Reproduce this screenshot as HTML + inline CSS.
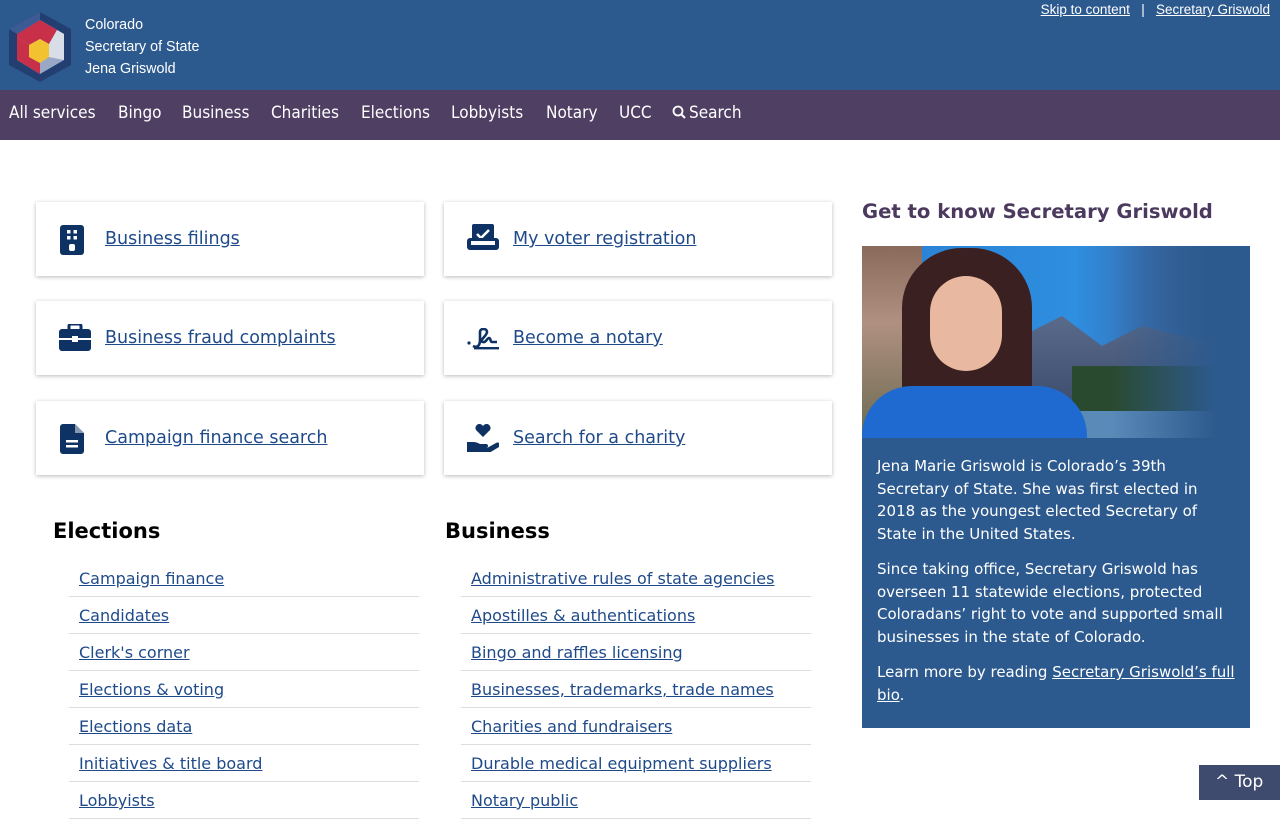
<!DOCTYPE html>
<html><head><meta charset="utf-8"><style>
*{margin:0;padding:0;box-sizing:border-box}
body{width:1280px;height:800px;overflow:hidden;background:#fff;font-family:"DejaVu Sans",Verdana,sans-serif;position:relative}
.hdr{position:absolute;left:0;top:0;width:1280px;height:90px;background:#2d5a8e}
.hdr .t{position:absolute;left:85px;color:#fff;font:14.3px "Liberation Sans",Arial,sans-serif}
.skip{position:absolute;top:2px;right:10px;color:#fff;font:13.5px "Liberation Sans",Arial,sans-serif}
.skip a{color:#fff;text-decoration:underline}
.nav{position:absolute;left:0;top:90px;width:1280px;height:50px;background:#4f3f63}
.nav span{position:absolute;top:13px;color:#fff;font:17px "DejaVu Sans Condensed","DejaVu Sans",sans-serif}
.card{position:absolute;width:388px;height:74px;background:#fff;box-shadow:0 1px 4px rgba(0,0,0,.28)}
.card svg{position:absolute;left:24px;top:23px}
.card a{position:absolute;left:69px;top:27px;color:#1f4a8a;font-size:17.5px;text-decoration:underline}
h2{position:absolute;font-size:21px;font-weight:bold;color:#000}
.list{position:absolute;width:350px}
.list div{height:37px;border-bottom:1px solid #ddd;padding:9px 0 0 10px}
.list a{color:#1f4a8a;font-size:16px;text-decoration:underline}
.side h3{position:absolute;left:862px;top:200px;font-size:19.6px;color:#4b3a5e;font-weight:bold}
.bio{position:absolute;left:862px;top:438px;width:388px;height:290px;background:#2d5a8e;color:#fff;font-size:15px;line-height:22.5px;padding:17px 15px}
.bio p{margin-bottom:13px}
.bio a{color:#fff;text-decoration:underline}
.top{position:absolute;left:1199px;top:765px;width:81px;height:35px;background:#3e4a6e;color:#fff;font-size:17px;padding:7px 0 0 16px}
</style></head><body>
<div class="hdr">
<svg style="position:absolute;left:9px;top:12px" width="63" height="70" viewBox="0 0 63 70">
<polygon points="31,0 62,17 62,53 31,70 0,53 0,17" fill="#233f72"/>
<polygon points="31,8 55,22 55,48 31,62 8,48 8,22" fill="#9aa8c8"/>
<polygon points="31,8 48,18 40,32 31,27 20,33 8,25 8,22" fill="#c8304a"/>
<polygon points="8,25 20,33 20,45 31,51 31,62 8,48" fill="#c8304a"/>
<polygon points="20,33 31,27 40,32 40,45 31,51 20,45" fill="#f2c230"/>
<polygon points="48,18 55,22 55,48 40,45 40,32" fill="#d8dde8"/>
<polygon points="31,0 31,8 8,22 0,17" fill="#3c5a94"/>
</svg>
<div class="t" style="top:17px">Colorado</div>
<div class="t" style="top:39px">Secretary of State</div>
<div class="t" style="top:61px">Jena Griswold</div>
<div class="skip"><a>Skip to content</a> &nbsp;&nbsp;|&nbsp;&nbsp; <a>Secretary Griswold</a></div>
</div>
<div class="nav">
<span style="left:9px">All services</span><span style="left:118px">Bingo</span><span style="left:182px">Business</span><span style="left:271px">Charities</span><span style="left:361px">Elections</span><span style="left:451px">Lobbyists</span><span style="left:546px">Notary</span><span style="left:619px">UCC</span>
<svg style="position:absolute;left:672px;top:15px" width="14" height="14" viewBox="0 0 14 14"><circle cx="6" cy="6" r="4.5" fill="none" stroke="#fff" stroke-width="1.8"/><path d="M9 9l4 4" stroke="#fff" stroke-width="2"/></svg>
<span style="left:689px">Search</span>
</div>

<div class="card" style="left:36px;top:202px"><svg width="24" height="30" viewBox="0 0 24 30"><rect width="24" height="30" rx="3" fill="#0d3263"/><rect x="7" y="5" width="3.5" height="3.5" fill="#fff"/><rect x="13.5" y="5" width="3.5" height="3.5" fill="#fff"/><rect x="7" y="11" width="3.5" height="3.5" fill="#fff"/><rect x="13.5" y="11" width="3.5" height="3.5" fill="#fff"/><rect x="9" y="19" width="6" height="7" rx="2" fill="#fff"/></svg><a>Business filings</a></div>
<div class="card" style="left:444px;top:202px"><svg width="32" height="28" viewBox="0 0 32 28" style="left:23px;top:22px"><rect x="5" y="0" width="22" height="19" rx="2" fill="#0d3263"/><path d="M10 10l4 4 8-8" stroke="#fff" stroke-width="2.5" fill="none"/><rect x="0" y="14" width="32" height="12" rx="3" fill="#0d3263"/><rect x="4" y="17" width="24" height="4" fill="#fff"/></svg><a>My voter registration</a></div>
<div class="card" style="left:36px;top:301px"><svg width="32" height="28" viewBox="0 0 32 28" style="left:23px"><rect x="10" y="0" width="12" height="8" rx="2" fill="none" stroke="#0d3263" stroke-width="3"/><rect x="0" y="5" width="32" height="22" rx="3" fill="#0d3263"/><rect x="0" y="14" width="32" height="2" fill="#fff"/><rect x="13" y="12" width="6" height="6" fill="#fff"/></svg><a>Business fraud complaints</a></div>
<div class="card" style="left:444px;top:301px"><svg width="32" height="22" viewBox="0 0 32 22" style="left:23px;top:27px"><circle cx="2" cy="15" r="1.6" fill="#0d3263"/><path d="M6 18c4 2 7 0 7-6V4c0-4 7-4 7 0s-9 9-4 10c3 1 4-4 6-4s1 4 3 4h5" stroke="#0d3263" stroke-width="2.6" fill="none"/><rect x="7" y="19" width="25" height="2.4" fill="#0d3263"/></svg><a>Become a notary</a></div>
<div class="card" style="left:36px;top:401px"><svg width="24" height="30" viewBox="0 0 24 30"><path d="M3 0h12l9 9v18a3 3 0 0 1-3 3H3a3 3 0 0 1-3-3V3a3 3 0 0 1 3-3z" fill="#0d3263"/><path d="M15 0v9h9" fill="#fff" opacity=".5"/><rect x="6" y="16" width="12" height="2.5" fill="#fff"/><rect x="6" y="21" width="12" height="2.5" fill="#fff"/></svg><a>Campaign finance search</a></div>
<div class="card" style="left:444px;top:401px"><svg width="32" height="28" viewBox="0 0 32 28" style="left:23px;top:23px"><path d="M16 13L9 6a4 4 0 0 1 7-4 4 4 0 0 1 7 4z" fill="#0d3263"/><path d="M0 18h6c3 0 5 1 7 2h6a2 2 0 0 1 0 4h-7l8 0 9-5a2.5 2.5 0 0 1 3 4l-10 6H0z" fill="#0d3263"/></svg><a>Search for a charity</a></div>

<h2 style="left:53px;top:519px">Elections</h2>
<h2 style="left:445px;top:519px">Business</h2>
<div class="list" style="left:69px;top:560px">
<div><a>Campaign finance</a></div><div><a>Candidates</a></div><div><a>Clerk's corner</a></div><div><a>Elections &amp; voting</a></div><div><a>Elections data</a></div><div><a>Initiatives &amp; title board</a></div><div><a>Lobbyists</a></div>
</div>
<div class="list" style="left:461px;top:560px">
<div><a>Administrative rules of state agencies</a></div><div><a>Apostilles &amp; authentications</a></div><div><a>Bingo and raffles licensing</a></div><div><a>Businesses, trademarks, trade names</a></div><div><a>Charities and fundraisers</a></div><div><a>Durable medical equipment suppliers</a></div><div><a>Notary public</a></div>
</div>

<div class="side"><h3>Get to know Secretary Griswold</h3></div>
<div style="position:absolute;left:862px;top:246px;width:388px;height:192px;overflow:hidden;background:linear-gradient(90deg,#2a7fd0 0%,#2e8ee0 55%,#3a6aa8 78%,#2d5a8e 92%)">
<div style="position:absolute;left:0;top:0;width:60px;height:192px;background:linear-gradient(#8a6a5a,#b09080 40%,#6a6a50)"></div>
<div style="position:absolute;left:160px;top:70px;width:200px;height:100px;background:linear-gradient(#5a6a8a,#3a4a6a);clip-path:polygon(0 20%,20% 0,40% 30%,60% 10%,100% 30%,100% 100%,0 100%)"></div>
<div style="position:absolute;left:210px;top:120px;width:150px;height:50px;background:#2a4a30"></div>
<div style="position:absolute;left:210px;top:165px;width:150px;height:27px;background:#5a8ab8"></div>
<div style="position:absolute;left:250px;top:0;width:138px;height:192px;background:linear-gradient(90deg,rgba(45,90,142,0),#2d5a8e 75%)"></div>
<div style="position:absolute;left:40px;top:2px;width:130px;height:175px;background:#3a2020;border-radius:60px 60px 30px 30px"></div>
<div style="position:absolute;left:68px;top:30px;width:72px;height:95px;background:#e8b8a0;border-radius:40px"></div>
<div style="position:absolute;left:0;top:140px;width:225px;height:60px;background:#1f6ad0;border-radius:50px 50px 0 0"></div>
</div>
<div class="bio">
<p>Jena Marie Griswold is Colorado’s 39th Secretary of State. She was first elected in 2018 as the youngest elected Secretary of State in the United States.</p>
<p>Since taking office, Secretary Griswold has overseen 11 statewide elections, protected Coloradans’ right to vote and supported small businesses in the state of Colorado.</p>
<p>Learn more by reading <a>Secretary Griswold’s full bio</a>.</p>
</div>
<div class="top">^ Top</div>
</body></html>
